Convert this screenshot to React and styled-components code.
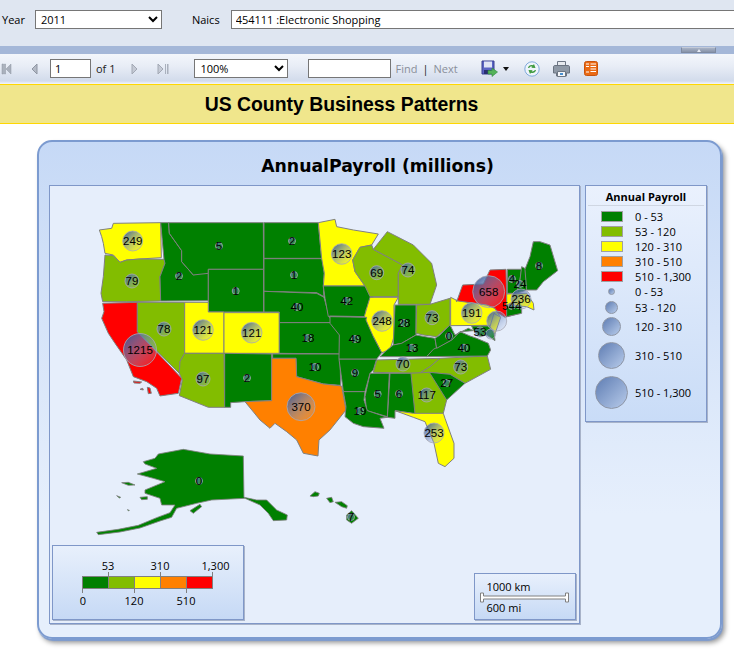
import React from "react";
import styled, { createGlobalStyle } from "styled-components";

const Global = createGlobalStyle`
  html, body { margin: 0; padding: 0; height: 653px; overflow: hidden; background: #fff; }
  body { font-family: "Open Sans", "Liberation Sans", sans-serif; font-size: 11px; color: #000; }
`;
const Page = styled.div`width: 734px; height: 653px; overflow: hidden; display: flex; flex-direction: column;`;
const Params = styled.div`height: 46px; flex: none; background: #dfe6f1; display: flex; align-items: flex-start; padding: 10px 0 0 2px; box-sizing: border-box;`;
const ParamLabel = styled.label`flex: none; font-size: 11px; line-height: 19px; margin-left: ${p => p.$ml || 0}px; margin-right: ${p => p.$mr || 0}px; white-space: nowrap;`;
const Select = styled.select`
  box-sizing: border-box; height: 19px; flex: none; width: ${p => p.$w}px; border: 1px solid #767676; border-radius: 0;
  background-color: #fff; font: 11px "Open Sans", sans-serif; color: #000; padding: 0 0 0 1px; margin: 0;
`;
const TextBox = styled.input`
  box-sizing: border-box; height: 19px; flex: none; width: ${p => p.$w}px; border: 1px solid #767676; border-radius: 0;
  background: #fff; font: 11px "Open Sans", sans-serif; color: #000; padding: 0 4px; margin: 0; outline: none;
`;
const Splitter = styled.div`height: 8px; flex: none; background: #a4b7d8; display: flex; justify-content: flex-end; padding-right: 18px; box-sizing: border-box;`;
const SplitHandle = styled.div`
  width: 35px; height: 6px; margin-top: 1px; background: linear-gradient(#a9b3c6, #8793a9); border: 1px solid #7e8aa0; border-top-color: #c3cad8;
  box-sizing: border-box; display: flex; justify-content: center; align-items: center;
  &::after { content: ""; border: 2px solid transparent; border-bottom: 3px solid #e8ecf4; border-top: 0; }
`;
const Toolbar = styled.div`
  height: 30px; flex: none; box-sizing: border-box; display: flex; align-items: center; padding: 0 0 1px 0;
  background: linear-gradient(#f3f6fb, #e8edf6 40%, #d2dbeb 90%, #f4f6fa);
`;
const Item = styled.span`display: inline-flex; flex: none; margin-left: ${p => p.$ml || 0}px;`;
const ToolText = styled.span`flex: none; font-size: 11px; color: ${p => p.$muted ? "#8a8f9a" : "#222"}; margin-left: ${p => p.$ml || 0}px;`;
const Banner = styled.div`
  height: 40px; flex: none; box-sizing: border-box; background: #f0e68c; border-top: 1px solid #ffd700; border-bottom: 1px solid #ffd700;
  display: flex; align-items: center; justify-content: center; padding-right: 51px;
  font: bold 19.4px "Liberation Sans", Arial, sans-serif;
`;
const Card = styled.section`
  box-sizing: border-box; margin: 16px 0 0 37px; width: 685px; height: 499px; flex: none; border: 2px solid #7c9bd0; border-radius: 15px;
  background: linear-gradient(#c6d9f6, #e6effc 75%);
  box-shadow: 1px 2px 1px #7c9bd0, 3px 4px 5px #9a9a9a; padding: 0 0 0 10px;
`;
const CardTitle = styled.h1`
  margin: 0; height: 43px; text-align: center; font: bold 17.3px/49px "DejaVu Sans", sans-serif; color: #000; padding-right: 14px;
`;
const Body = styled.div`display: flex; align-items: flex-start; gap: 5px;`;
const MapPanel = styled.div`
  position: relative; box-sizing: border-box; width: 531px; height: 439px; background: #e6eefb; border: 1px solid #7f97c8; box-shadow: 1px 1px 0 #a8b3c9; flex: none;
`;
const MapSvg = styled.svg`display: block;`;
const MapNum = styled.text`font: 11.5px "Liberation Sans", sans-serif; fill: #000; text-anchor: middle; dominant-baseline: central;`;
const Chip = styled.div`
  position: absolute; box-sizing: border-box; border: 1px solid #7f97c8; box-shadow: 1px 1px 0 #a8b3c9;
  background: linear-gradient(#e8f0fc, #c6d9f5);
  left: ${p => p.$l}px; top: ${p => p.$t}px; width: ${p => p.$w}px; height: ${p => p.$h}px;
`;
const ChipSvg = styled.svg`display: block;`;
const ChipText = styled.text`font: 11px "Open Sans", sans-serif; fill: #000; text-anchor: ${p => p.$a || "middle"};`;
const Legend = styled.aside`
  box-sizing: border-box; width: 122px; height: 237px; border: 1px solid #7f97c8; box-shadow: 1px 1px 0 #a8b3c9; flex: none;
  background: linear-gradient(#eaf1fd, #c9dcf7);
`;
const LegendTitle = styled.div`
  height: 19px; margin: 0 2px 3px; text-align: center; font: bold 11px/21px "Open Sans", sans-serif; white-space: nowrap;
  border-bottom: 1px solid #cfd6e2;
`;
const LegendRow = styled.div`display: grid; grid-template-columns: 49px 1fr; align-items: center; height: ${p => p.$h}px; font-size: 11px; white-space: nowrap;`;
const IconCell = styled.div`display: flex; justify-content: center; padding-left: 2px;`;
const Swatch = styled.div`width: 22px; height: 11px; box-sizing: border-box; background: ${p => p.$c}; border: 1px solid #a0a0a0;`;
const Dot = styled.div`
  width: ${p => p.$d}px; height: ${p => p.$d}px; box-sizing: border-box; border-radius: 50%; border: 1px solid #8d95a5;
  background: linear-gradient(135deg, #5f7db3, #b7cbea); flex: none;
`;

const G = "#008000", L = "#82bd00", Y = "#ffff00", O = "#ff8000", R = "#ff0000";

const west = [
  [Y, "28,60 65,55 70,40 212,38 214,143 150,147 110,150 90,157 70,135 45,130 40,100 35,80"],
  [L, "45,135 70,137 90,157 110,150 150,147 222,148 225,160 210,200 212,273 110,275 38,275 33,250 40,200"],
  [R, "38,280 142,277 142,365 275,505 265,550 210,558 200,535 170,515 130,500 110,450 75,400 55,370 35,325 42,305"],
  [L, "142,277 284,277 284,430 270,455 268,490 142,365"],
  [G, "212,38 236,38 238,70 275,122 275,155 310,195 355,180 355,272 212,273 210,200 225,160 222,148"],
  [G, "236,38 520,38 521,178 355,178 355,190 310,195 275,155 275,122 238,70"],
  [G, "355,178 521,178 521,306 355,306"],
  [Y, "284,277 355,277 355,306 402,306 402,430 284,430"],
  [Y, "402,308 568,308 568,430 402,430"],
  [L, "270,455 284,430 402,430 404,592 355,592 268,557 277,510 268,490"],
  [G, "404,430 545,432 545,572 465,575 422,578 422,592 404,592"],
  [G, "522,38 685,38 695,145 522,145"],
  [G, "522,146 697,146 703,190 700,228 702,260 680,248 522,244"],
  [G, "522,244 680,250 702,262 718,320 728,338 568,338 568,306 522,306"],
  [G, "568,338 728,338 750,362 750,432 568,430"],
  [G, "548,432 750,432 752,526 700,522 620,500 618,445 548,445"],
  [O, "545,445 618,445 620,500 700,522 755,528 768,600 720,660 687,690 684,738 640,730 620,690 590,665 555,640 540,655 510,630 465,575 545,572"],
  [R, "130,513 155,516 150,520 132,519"],
  [R, "172,532 180,534 184,550 175,551"],
  [R, "150,538 158,535 160,540"],
];
const east = [
  [Y, "-35,38 15,28 20,50 70,60 145,72 125,105 90,112 68,150 75,185 105,228 -20,228 -17,190 -25,146"],
  [G, "-20,228 105,228 130,262 108,300 110,320 0,318 -5,320 -15,265"],
  [L, "130,118 190,150 218,165 205,190 205,260 120,260 105,228 75,185 68,150 90,112 125,105"],
  [L, "130,118 172,65 250,105 305,160 320,225 300,283 205,283 205,190 218,165 190,150"],
  [Y, "120,262 205,262 192,285 192,380 180,420 155,428 130,380 105,345 100,330 110,295"],
  [G, "195,285 258,285 258,375 215,400 190,405"],
  [L, "260,285 300,283 360,265 360,345 320,380 280,375 258,370"],
  [G, "150,440 165,425 190,405 215,400 258,375 285,380 315,385 320,415 290,440"],
  [L, "130,487 140,450 330,445 300,470 268,490"],
  [L, "330,445 472,438 482,478 405,520 360,493 298,487 268,490 300,470"],
  [G, "298,487 360,493 405,520 350,570 300,510"],
  [L, "240,490 298,487 350,570 340,610 255,612 245,530"],
  [G, "180,490 243,490 255,612 195,602 195,625 172,622"],
  [G, "120,490 178,490 172,620 110,602 105,560"],
  [G, "27,447 140,447 130,480 120,490 105,545 40,545"],
  [G, "0,320 110,322 108,330 130,380 155,428 140,447 27,447 28,375 0,340"],
  [G, "40,545 105,545 102,570 112,602 172,622 150,625 162,655 100,650 70,640 45,620 48,590"],
  [G, "310,418 365,390 390,365 420,378 440,385 475,400 482,420 472,438 290,440"],
  [G, "315,385 330,375 360,345 375,375 415,355 430,362 390,365 365,390 320,415"],
  [Y, "362,262 378,270 470,285 495,295 510,320 492,346 362,347"],
  [R, "380,275 398,225 460,222 480,180 528,178 530,250 530,300 570,310 525,322 505,310 495,295 470,285 378,272"],
  [G, "425,348 490,348 495,392 470,375 450,380 430,360"],
  [Y, "492,310 512,322 495,372 480,350"],
  [G, "532,178 575,178 570,210 565,250 532,250"],
  [G, "575,170 590,178 590,240 560,250 570,210"],
  [G, "585,178 600,140 610,95 630,95 660,105 683,182 640,215 620,240 590,240"],
  [Y, "530,252 590,250 610,280 612,300 590,290 530,285"],
  [G, "530,285 575,288 575,310 530,320"],
  [Y, "195,602 250,610 340,610 345,625 372,700 372,745 345,770 325,760 312,700 285,635 250,622"],
];
const north = [
  "340,65 375,55 385,42 460,28 540,42 640,48 642,172 680,180 710,180 740,210 772,225 770,240 730,242 715,220 690,195 645,175 545,180 500,190 440,205 425,232 390,243 330,264 270,276 205,284 200,277 265,268 325,256 380,233 420,218 435,195 395,195 390,175 345,160 345,150 405,125 370,115 322,102 380,85 345,72",
  "275,128 295,127 315,135 295,136", "330,172 352,170 352,178 335,179", "480,212 510,193 515,200 490,220",
  "260,167 272,172 268,174", "292,209 298,211 296,213", "840,168 855,155 868,160 865,168 850,170", "890,175 905,172 910,185 900,188",
  "915,187 935,185 952,197 950,205 935,200", "950,225 965,212 985,235 965,250 950,240",
];
const bubbles = [
  [132.7,241,10,"249"],[132,281,7,"79"],[164,329,7,"78"],[203,330,10.3,"121"],[251.7,332.7,10.3,"121"],[203,379,7,"97"],
  [219,246,3.5,"5"],[179,276,3.5,"2"],[292,241,3.5,"2"],[294,275,3.5,"1"],[297,307,3.5,"40"],[235.7,291,3.5,"1"],[308,338,3.5,"18"],[315,367,3.5,"10"],[247,378,3.5,"2"],
  [140,350,16.5,"1215"],[301,406.7,14,"370"],
  [341.7,254,10.3,"123"],[376.7,272.7,7,"69"],[408,270,7,"74"],[346.7,301,3.5,"42"],[382,321,10.3,"248"],[404,323,3.5,"28"],[432,317.7,7,"73"],
  [471.7,313,10.3,"191"],[488.7,291.7,16,"658"],[355,339,3.5,"49"],[412,347.7,3.5,"13"],[449,336,3.5,"0"],[464,347.7,3.5,"40"],[480,332,5,"53"],
  [403,364,7,"70"],[460.7,367,7,"73"],[355,372.7,3.5,"9"],[377.7,394,3.5,"5"],[399,393.7,3.5,"6"],[360,411,3.5,"19"],[446.7,383,3.5,"27"],[426.7,395,7,"117"],[434,433,10,"253"],
  [539,265.7,3.5,"8"],[512,279,3.5,"4"],[520,284,3.5,"24"],[521,299,10,"236"],[496.7,321,10,""],[490.7,334,5,""],[511.7,306,3.5,"544"],
  [199,481,3.5,"0"],[351,517,3.5,"7"],
];

const FirstIcon = () => <svg width="12" height="12" viewBox="0 0 12 12"><path d="M1 1h1.5v10H1zM3.5 1h1v10h-1zM10 1v10L5 6z" fill="#a9b0bc" stroke="#8f96a3" strokeWidth=".5"/></svg>;
const PrevIcon = () => <svg width="7" height="12" viewBox="0 0 7 12"><path d="M6 1v10L1 6z" fill="#b4bac6" stroke="#8f96a3"/></svg>;
const NextIcon = () => <svg width="7" height="12" viewBox="0 0 7 12"><path d="M1 1v10L6 6z" fill="#c5cad5" stroke="#a2a8b4"/></svg>;
const LastIcon = () => <svg width="12" height="12" viewBox="0 0 12 12"><path d="M1 1v10L6 6z" fill="#c5cad5" stroke="#a2a8b4"/><path d="M8 1h1v10H8zM10 1h1.5v10H10z" fill="#a9b0bc"/></svg>;
const SaveIcon = () => (
  <svg width="17" height="17" viewBox="0 0 17 17">
    <path d="M1 1h12v13H1z" fill="#5b64c4" stroke="#383f90"/><path d="M3 1.500h8v6H3z" fill="#dfe4f5"/>
    <path d="M3 10h7v4H3z" fill="#2a2f70"/><path d="M7 10.500 L11 10.500 11 8 16.500 12 11 16.500 11 14 7 14z" fill="#55b35a" stroke="#2e8a3a" strokeWidth=".6"/>
  </svg>
);
const RefreshIcon = () => (
  <svg width="16" height="16" viewBox="0 0 16 16">
    <circle cx="8" cy="8" r="7.2" fill="#eef4fb" stroke="#7fa9dc"/>
    <path d="M4 7c.3-2.500 3-3.500 5-2.700L10 3l1.500 4-4.200-.2 1-1.100c-1.200-.4-2.400 0-3 1.300z" fill="#3f9a3f"/>
    <path d="M12 9c-.3 2.500-3 3.500-5 2.700L6 13l-1.500-4 4.200.2-1 1.100c1.200.4 2.400 0 3-1.300z" fill="#3f9a3f"/>
  </svg>
);
const PrintIcon = () => (
  <svg width="17" height="16" viewBox="0 0 17 16">
    <path d="M4.500.500h8v5h-8z" fill="#e7eaef" stroke="#6d7684"/>
    <path d="M.500 6c0-1 .5-1.500 1.500-1.500h13c1 0 1.500.5 1.500 1.500v6h-3v3h-10v-3h-3z" fill="#8f99a6" stroke="#6a7380"/>
    <path d="M4.500 10.500h8v5h-8z" fill="#f4f6f9" stroke="#6d7684"/><path d="M7 12h3v2H7z" fill="#4a90d0"/>
  </svg>
);
const LayoutIcon = () => (
  <svg width="14" height="15" viewBox="0 0 14 15">
    <rect x=".5" y=".5" width="13" height="14" rx="2" fill="#ea6a14" stroke="#c8530c"/>
    <path d="M6.500 3H12M6.500 5.500H12M6.500 8H12M6.500 10.500H12M2 3h3M2 5.500h3M2 11h3" stroke="#fff" strokeWidth="1.200" fill="none"/>
  </svg>
);

const legendRows = [
  [15, <Swatch $c={G} />, "0 - 53"], [15, <Swatch $c={L} />, "53 - 120"], [15, <Swatch $c={Y} />, "120 - 310"],
  [15, <Swatch $c={O} />, "310 - 510"], [15, <Swatch $c={R} />, "510 - 1,300"],
  [15, <Dot $d={7} />, "0 - 53"], [16, <Dot $d={13} />, "53 - 120"], [22, <Dot $d={19} />, "120 - 310"],
  [37, <Dot $d={27} />, "310 - 510"], [37, <Dot $d={33} />, "510 - 1,300"],
];
const ramp = [G, L, Y, O, R];

export default function App() {
  return (
    <Page>
      <Global />
      <Params>
        <ParamLabel $mr={10}>Year</ParamLabel>
        <Select $w={127} defaultValue="2011"><option>2011</option></Select>
        <ParamLabel $ml={30} $mr={11}>Naics</ParamLabel>
        <TextBox $w={520} defaultValue="454111 :Electronic Shopping" />
      </Params>
      <Splitter><SplitHandle /></Splitter>
      <Toolbar>
        <Item $ml={1}><FirstIcon /></Item>
        <Item $ml={18}><PrevIcon /></Item>
        <Item $ml={12}><TextBox $w={41} defaultValue="1" /></Item>
        <ToolText $ml={5}>of 1</ToolText>
        <Item $ml={16}><NextIcon /></Item>
        <Item $ml={19}><LastIcon /></Item>
        <Item $ml={25}><Select $w={94} defaultValue="100%"><option>100%</option></Select></Item>
        <Item $ml={20}><TextBox $w={83} /></Item>
        <ToolText $muted $ml={4}>Find</ToolText>
        <ToolText $ml={5}>|</ToolText>
        <ToolText $muted $ml={5}>Next</ToolText>
        <Item $ml={23}><SaveIcon /></Item>
        <Item $ml={5}><svg width="6" height="4" viewBox="0 0 6 4"><path d="M0 0h6L3 4z" fill="#111" /></svg></Item>
        <Item $ml={15}><RefreshIcon /></Item>
        <Item $ml={13}><PrintIcon /></Item>
        <Item $ml={14}><LayoutIcon /></Item>
      </Toolbar>
      <Banner>US County Business Patterns</Banner>
      <Card>
        <CardTitle>AnnualPayroll (millions)</CardTitle>
        <Body>
          <MapPanel>
            <MapSvg width="529" height="437" viewBox="50 186 529 437">
              <defs>
                <linearGradient id="bub" x1="0.15" y1="0.15" x2="0.85" y2="0.85">
                  <stop offset="0" stopColor="#46649f" stopOpacity=".85" />
                  <stop offset="1" stopColor="#9db2dc" stopOpacity=".2" />
                </linearGradient>
              </defs>
              <g transform="translate(90 210) scale(.3333)" stroke="#808080" strokeWidth="3" strokeLinejoin="round">
                {west.map(([c, p], i) => <polygon key={i} points={p} fill={c} />)}
              </g>
              <g transform="translate(330 210) scale(.3333)" stroke="#808080" strokeWidth="3" strokeLinejoin="round">
                {east.map(([c, p], i) => <polygon key={i} points={p} fill={c} />)}
              </g>
              <g transform="translate(30 440) scale(.3333)" stroke="#808080" strokeWidth="2.500" strokeLinejoin="round" fill={G}>
                {north.map((p, i) => <polygon key={i} points={p} />)}
              </g>
              {bubbles.map(([x, y, r], i) => (
                <circle key={i} cx={x} cy={y} r={r} fill="url(#bub)" stroke="#a9a9b5" strokeOpacity=".8" />
              ))}
              {bubbles.map(([x, y, , t], i) => t && <MapNum key={i} x={x} y={y}>{t}</MapNum>)}
            </MapSvg>
            <Chip $l={2} $t={359} $w={192} $h={75}>
              <ChipSvg width="190" height="73" viewBox="54 546 190 73">
                {ramp.map((c, i) => <rect key={c} x={83.500 + i * 26} y="576.500" width="26" height="12" fill={c} stroke="#808080" />)}
                <path d="M109.500 572v5M161.500 572v5M213.500 572v5M83.500 588v5M135.500 588v5M187.500 588v5" stroke="#808080" />
                <ChipText x="109" y="570">53</ChipText>
                <ChipText x="161" y="570">310</ChipText>
                <ChipText x="216.500" y="570">1,300</ChipText>
                <ChipText x="84" y="605">0</ChipText>
                <ChipText x="135" y="605">120</ChipText>
                <ChipText x="187" y="605">510</ChipText>
              </ChipSvg>
            </Chip>
            <Chip $l={424} $t={387} $w={102} $h={47}>
              <ChipSvg width="100" height="45" viewBox="475 574 100 45">
                <ChipText $a="start" x="486.500" y="591">1000 km</ChipText>
                <path d="M480.500 593h3v3h82v-3h3v9h-3v-3h-82v3h-3z" fill="#fff" stroke="#808080" />
                <ChipText $a="start" x="486.500" y="612">600 mi</ChipText>
              </ChipSvg>
            </Chip>
          </MapPanel>
          <Legend>
            <LegendTitle>Annual Payroll</LegendTitle>
            {legendRows.map(([h, icon, label], i) => (
              <LegendRow key={i} $h={h}><IconCell>{icon}</IconCell><span>{label}</span></LegendRow>
            ))}
          </Legend>
        </Body>
      </Card>
    </Page>
  );
}
